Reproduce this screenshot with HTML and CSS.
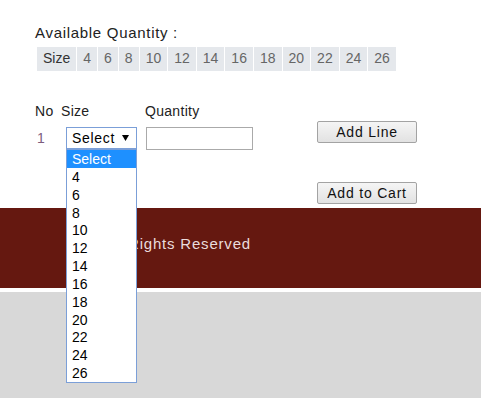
FILE: index.html
```html
<!DOCTYPE html>
<html lang="en">

<head>
    <meta charset="utf-8">
    <meta name="viewport" content="width=device-width, initial-scale=1.0">
    <title>Order</title>

    <link rel="stylesheet" href="styles.css">

</head>

<body>
    <section class="order">
        <p class="avail_title">Available Quantity :</p>

        <div class="sizes">
            <span class="size_cell size_label">Size</span>
            <span class="size_cell">4</span>
            <span class="size_cell">6</span>
            <span class="size_cell">8</span>
            <span class="size_cell">10</span>
            <span class="size_cell">12</span>
            <span class="size_cell">14</span>
            <span class="size_cell">16</span>
            <span class="size_cell">18</span>
            <span class="size_cell">20</span>
            <span class="size_cell">22</span>
            <span class="size_cell">24</span>
            <span class="size_cell">26</span>
        </div>

        <div class="order_form">
            <div class="lines">
                <span class="head">No</span>
                <span class="head">Size</span>
                <span class="head">Quantity</span>

                <span class="line_no">1</span>
                <div class="select_wrap">
                    <div class="select_box">
                        <span>Select</span>
                        <svg class="arrow" width="7" height="6" viewBox="0 0 7 6"><polygon points="0,0 7,0 3.5,6" fill="#000"/></svg>
                    </div>
                    <ul class="select_list">
                        <li class="active">Select</li>
                        <li>4</li>
                        <li>6</li>
                        <li>8</li>
                        <li>10</li>
                        <li>12</li>
                        <li>14</li>
                        <li>16</li>
                        <li>18</li>
                        <li>20</li>
                        <li>22</li>
                        <li>24</li>
                        <li>26</li>
                    </ul>
                </div>
                <input type="text" class="qty">
            </div>

            <div class="actions">
                <button class="btn">Add Line</button>
                <button class="btn">Add to Cart</button>
            </div>
        </div>
    </section>

    <footer>
        <p>All Rights Reserved</p>
    </footer>

    <div class="bottom"></div>
</body>

</html>
```

FILE: styles.css
```css
body {
    font-family: "Liberation Sans", Arial, sans-serif;
    margin: 0;
    background-color: #fff;
    color: #222;
}

.order {
    padding: 24px 0 0 35px;
}

.avail_title {
    margin: 0;
    font-size: 15px;
    line-height: 18px;
    letter-spacing: 0.7px;
    color: #222;
}

.sizes {
    display: flex;
    gap: 1px;
    margin: 5px 0 0 2px;
}

.size_cell {
    background-color: #e5e8ec;
    height: 24px;
    line-height: 22px;
    padding: 0 6px;
    font-size: 14px;
    color: #666;
}

.size_label {
    color: #333;
}

.order_form {
    display: flex;
    margin-top: 31px;
}

.lines {
    display: grid;
    grid-template-columns: 26px 84px 107px;
    grid-template-rows: 18px 22px;
    row-gap: 7px;
    align-items: center;
    height: 101px;
    align-content: start;
}

.head {
    font-size: 14px;
    line-height: 18px;
    letter-spacing: 0.3px;
    color: #222;
}

.line_no {
    font-size: 14px;
    color: #7d5c7d;
    padding-left: 2px;
}

.select_wrap {
    position: relative;
    margin-left: 5px;
    width: 71px;
    height: 22px;
}

.select_box {
    box-sizing: border-box;
    height: 22px;
    border: 1px solid #7b9fd8;
    display: flex;
    align-items: center;
    padding-left: 5px;
    font-size: 14px;
    letter-spacing: 0.7px;
    color: #000;
}

.arrow {
    margin-left: 7px;
}

/* open option list lies over the footer */
.select_list {
    position: absolute;
    top: 100%;
    left: 0;
    z-index: 10;
    box-sizing: border-box;
    width: 71px;
    margin: 0;
    padding: 0;
    list-style: none;
    background-color: #fff;
    border: 1px solid #7b9fd8;
}

.select_list li {
    height: 17.85px;
    line-height: 18px;
    padding-left: 5px;
    font-size: 14px;
    color: #000;
}

.select_list li.active {
    background-color: #1e90ff;
    color: #fff;
}

.qty {
    box-sizing: border-box;
    width: 107px;
    height: 23px;
    margin: 0 0 0 1px;
    border: 1px solid #aaa;
    padding: 0 4px;
    font-family: inherit;
}

.actions {
    display: flex;
    flex-direction: column;
    gap: 39px;
    margin: 19px 0 4px 65px;
}

.btn {
    box-sizing: border-box;
    width: 100px;
    height: 22px;
    padding: 0;
    border: 1px solid #a3a3a3;
    border-radius: 2px;
    background: linear-gradient(#f5f5f5, #e2e2e2);
    font-family: "Liberation Sans", Arial, sans-serif;
    font-size: 14px;
    letter-spacing: 0.8px;
    color: #111;
}

footer {
    background-color: #651810;
    height: 80px;
    padding: 26px 0 0 104px;
    box-sizing: border-box;
}

footer p {
    margin: 0;
    font-size: 15px;
    line-height: 20px;
    letter-spacing: 0.8px;
    color: #eadcdc;
}

.bottom {
    margin-top: 4px;
    height: 120px;
    background-color: #d8d8d8;
}
```
